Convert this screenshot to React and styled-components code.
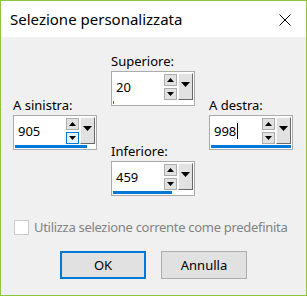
import styled, { createGlobalStyle } from 'styled-components';

const GlobalStyle = createGlobalStyle`
  html, body {
    margin: 0;
    padding: 0;
    background: #f0f0f0;
  }
  * {
    box-sizing: border-box;
  }
`;

const fields = {
  top: { label: 'Superiore:', value: '20', fill: 1 },
  left: { label: 'A sinistra:', value: '905', fill: 90 },
  right: { label: 'A destra:', value: '998', fill: 100, caret: true },
  bottom: { label: 'Inferiore:', value: '459', fill: 74 },
};

function Triangle({ size = 'small', down }) {
  const w = size === 'small' ? 7 : 9;
  const h = size === 'small' ? 4 : 5;
  return (
    <svg width={w} height={h} viewBox={`0 0 ${w} ${h}`}>
      <polygon
        points={down ? `0,0 ${w},0 ${w / 2},${h}` : `0,${h} ${w},${h} ${w / 2},0`}
        fill="#000"
      />
    </svg>
  );
}

function SpinField({ label, value, fill, caret, hoverDown }) {
  return (
    <Field>
      <Label>{label}</Label>
      <Box>
        <BoxRow>
          <Value>
            {value}
            {caret && <Caret />}
          </Value>
          <SpinCol>
            <SpinBtn>
              <Triangle />
            </SpinBtn>
            <SpinBtn $hover={hoverDown}>
              <Triangle down />
            </SpinBtn>
          </SpinCol>
          <DropBtn>
            <Triangle size="big" down />
          </DropBtn>
        </BoxRow>
        <BarTrack>
          <Bar style={{ width: `${fill}%` }} />
        </BarTrack>
      </Box>
    </Field>
  );
}

export default function App() {
  return (
    <>
      <GlobalStyle />
      <Window>
        <TitleBar>
          <Title>Selezione personalizzata</Title>
          <Close>
            <svg width="12" height="12" viewBox="0 0 12 12">
              <path d="M0.5 0.5 L11.5 11.5 M11.5 0.5 L0.5 11.5" stroke="#000" strokeWidth="1" />
            </svg>
          </Close>
        </TitleBar>
        <Body>
          <Fields>
            <Column $offset>
              <SpinField {...fields.left} hoverDown />
            </Column>
            <Column>
              <SpinField {...fields.top} />
              <SpinField {...fields.bottom} />
            </Column>
            <Column $offset>
              <SpinField {...fields.right} />
            </Column>
          </Fields>
          <CheckRow>
            <CheckBox />
            <CheckLabel>Utilizza selezione corrente come predefinita</CheckLabel>
          </CheckRow>
          <Buttons>
            <Button $primary>OK</Button>
            <Button>Annulla</Button>
          </Buttons>
        </Body>
      </Window>
    </>
  );
}

const Window = styled.div`
  width: 307px;
  height: 296px;
  border: 1px solid #8cc63e;
  background: #f0f0f0;
  display: flex;
  flex-direction: column;
  font-family: 'Noto Sans', 'Liberation Sans', sans-serif;
  color: #000;
`;

const TitleBar = styled.div`
  height: 36px;
  flex-shrink: 0;
  background: #fff;
  display: flex;
  align-items: center;
  justify-content: space-between;
  padding: 0 15px 0 9px;
`;

const Title = styled.div`
  font-size: 15px;
`;

const Close = styled.div`
  display: flex;
  align-items: center;
  margin-top: 2px;
`;

const Body = styled.div`
  flex: 1;
  display: flex;
  flex-direction: column;
  padding: 16px 12px 0 12px;
`;

const Fields = styled.div`
  display: flex;
  align-items: flex-start;
  gap: 14px;
`;

const Column = styled.div`
  display: flex;
  flex-direction: column;
  gap: 37px;
  margin-top: ${({ $offset }) => ($offset ? '44px' : '0')};
`;

const Field = styled.div`
  display: flex;
  flex-direction: column;
  gap: 2px;
`;

const Label = styled.div`
  font-size: 13px;
  line-height: 16px;
`;

const Box = styled.div`
  width: 84px;
  height: 35px;
  border: 1px solid #ababab;
  background: #fff;
  display: flex;
  flex-direction: column;
  padding: 1px;
`;

const BoxRow = styled.div`
  flex: 1;
  display: flex;
`;

const Value = styled.div`
  flex: 1;
  display: flex;
  align-items: center;
  padding-left: 3px;
  font-size: 13px;
  color: #000;
`;

const Caret = styled.span`
  display: inline-block;
  width: 1px;
  height: 16px;
  background: #000;
  margin-left: 1px;
`;

const SpinCol = styled.div`
  display: flex;
  flex-direction: column;
  justify-content: center;
  gap: 2px;
  padding: 0 1px;
`;

const SpinBtn = styled.div`
  width: 13px;
  height: 12px;
  border: 1px solid ${({ $hover }) => ($hover ? '#0078d7' : '#adadad')};
  background: ${({ $hover }) => ($hover ? '#e5f1fb' : '#e1e1e1')};
  display: flex;
  align-items: center;
  justify-content: center;
`;

const DropBtn = styled.div`
  width: 15px;
  background: #e1e1e1;
  border-left: 1px solid #f8f8f8;
  border-top: 1px solid #f8f8f8;
  border-right: 1px solid #696969;
  border-bottom: 1px solid #696969;
  display: flex;
  align-items: center;
  justify-content: center;
  padding-bottom: 4px;
`;

const BarTrack = styled.div`
  height: 3px;
  margin-top: 1px;
`;

const Bar = styled.div`
  height: 100%;
  background: #0078d7;
`;

const CheckRow = styled.div`
  display: flex;
  align-items: center;
  gap: 5px;
  margin-top: 22px;
  padding-left: 1px;
  height: 18px;
`;

const CheckBox = styled.div`
  width: 15px;
  height: 15px;
  border: 1px solid #cccccc;
  background: #fff;
`;

const CheckLabel = styled.div`
  font-size: 13px;
  letter-spacing: -0.3px;
  white-space: nowrap;
  color: #838383;
`;

const Buttons = styled.div`
  display: flex;
  justify-content: center;
  gap: 15px;
  margin-top: 15px;
`;

const Button = styled.div`
  width: 86px;
  height: 28px;
  display: flex;
  align-items: center;
  justify-content: center;
  font-size: 13px;
  background: #e1e1e1;
  border: ${({ $primary }) => ($primary ? '2px solid #0078d7' : '1px solid #adadad')};
`;
